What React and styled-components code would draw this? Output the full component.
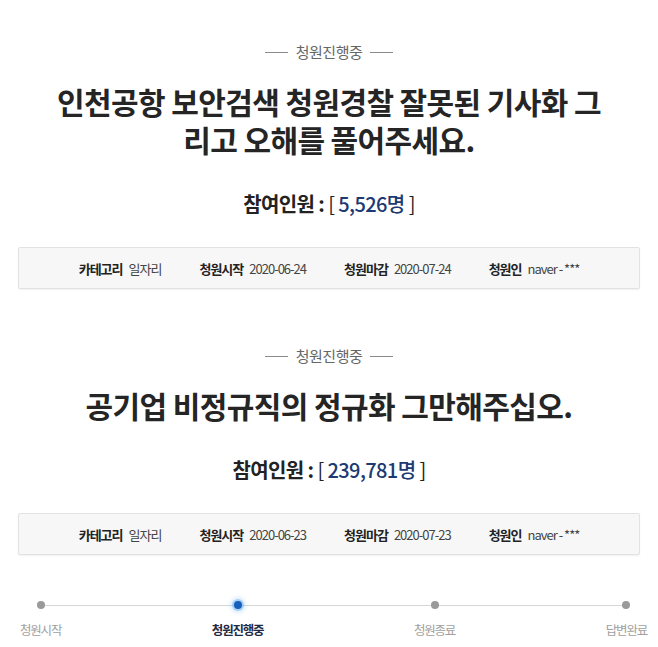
import React from 'react';
import styled, { createGlobalStyle } from 'styled-components';

const GlobalStyle = createGlobalStyle`
  body {
    margin: 0;
    background: #ffffff;
    font-family: "Noto Sans CJK KR", "Noto Sans", sans-serif;
  }
`;

const Page = styled.div`
  width: 658px;
  height: 647px;
  box-sizing: border-box;
  padding-top: 42px;
  overflow: hidden;
`;

const Petition = styled.section`
  display: flex;
  flex-direction: column;
  align-items: center;
  padding: 0 18px;

  & + & {
    margin-top: 57px;
  }
`;

const Status = styled.div`
  display: flex;
  align-items: center;
  gap: 8px;
  font-size: 15px;
  line-height: 20px;
  letter-spacing: -0.5px;
  color: #666;

  &::before,
  &::after {
    content: '';
    width: 23px;
    height: 1px;
    background: #8a8a8a;
  }
`;

const Title = styled.h2`
  margin: 20px 0 0;
  max-width: 570px;
  font-size: 30px;
  line-height: 38px;
  font-weight: 700;
  letter-spacing: -0.6px;
  word-break: break-all;
  color: #252525;
  text-align: center;
`;

const Count = styled.p`
  margin: 33px 0 0;
  font-size: 20px;
  line-height: 26px;
  font-weight: 700;
  letter-spacing: -0.6px;
  color: #222;
`;

const Bracket = styled.span`
  font-weight: 400;
`;

const Number = styled.span`
  font-weight: 500;
  color: #1d3a72;
`;

const InfoBox = styled.div`
  align-self: stretch;
  margin-top: 30px;
  height: 42px;
  box-sizing: border-box;
  display: flex;
  justify-content: center;
  align-items: center;
  gap: 38px;
  background: #f7f7f7;
  border: 1px solid #e2e2e2;
  border-radius: 2px;
  box-shadow: 0 1px 2px rgba(0, 0, 0, 0.06);
  font-size: 13px;
  letter-spacing: -1px;
`;

const InfoItem = styled.div`
  display: flex;
  align-items: baseline;
  gap: 6px;
`;

const InfoLabel = styled.strong`
  font-weight: 700;
  color: #222;
`;

const InfoValue = styled.span`
  color: #444;
`;

// step line runs from the first dot to the last one
const Progress = styled.div`
  position: relative;
  display: flex;
  justify-content: space-between;
  margin-top: 46px;
  padding: 0 11px 0 20px;

  &::before {
    content: '';
    position: absolute;
    top: 4px;
    left: 40px;
    right: 34px;
    height: 1px;
    background: #d6d6d6;
  }
`;

const Step = styled.div`
  position: relative;
  display: flex;
  flex-direction: column;
  align-items: center;
  gap: 12px;
  font-size: 12.5px;
  line-height: 18px;
  letter-spacing: -1.2px;
  font-weight: ${(p) => (p.$active ? 700 : 400)};
  color: ${(p) => (p.$active ? '#1f2a44' : '#a0a0a0')};
`;

const Dot = styled.span`
  width: 8px;
  height: 8px;
  border-radius: 50%;
  background: ${(p) => (p.$active ? '#1560bd' : '#9a9a9a')};
  box-shadow: ${(p) =>
    p.$active
      ? '0 0 0 2px rgba(110, 175, 240, 0.45), 0 0 5px 3px rgba(110, 175, 240, 0.35)'
      : 'none'};
`;

const petitions = [
  {
    title: '인천공항 보안검색 청원경찰 잘못된 기사화 그리고 오해를 풀어주세요.',
    count: '5,526',
    category: '일자리',
    start: '2020-06-24',
    end: '2020-07-24',
    author: 'naver - ***',
  },
  {
    title: '공기업 비정규직의 정규화 그만해주십오.',
    count: '239,781',
    category: '일자리',
    start: '2020-06-23',
    end: '2020-07-23',
    author: 'naver - ***',
  },
];

const steps = ['청원시작', '청원진행중', '청원종료', '답변완료'];

export default function App() {
  return (
    <>
      <GlobalStyle />
      <Page>
        {petitions.map((item) => (
          <Petition key={item.title}>
            <Status>청원진행중</Status>
            <Title>{item.title}</Title>
            <Count>
              참여인원 : <Bracket>[</Bracket> <Number>{item.count}명</Number> <Bracket>]</Bracket>
            </Count>
            <InfoBox>
              <InfoItem>
                <InfoLabel>카테고리</InfoLabel>
                <InfoValue>{item.category}</InfoValue>
              </InfoItem>
              <InfoItem>
                <InfoLabel>청원시작</InfoLabel>
                <InfoValue>{item.start}</InfoValue>
              </InfoItem>
              <InfoItem>
                <InfoLabel>청원마감</InfoLabel>
                <InfoValue>{item.end}</InfoValue>
              </InfoItem>
              <InfoItem>
                <InfoLabel>청원인</InfoLabel>
                <InfoValue>{item.author}</InfoValue>
              </InfoItem>
            </InfoBox>
          </Petition>
        ))}
        <Progress>
          {steps.map((label, i) => (
            <Step key={label} $active={i === 1}>
              <Dot $active={i === 1} />
              {label}
            </Step>
          ))}
        </Progress>
      </Page>
    </>
  );
}
